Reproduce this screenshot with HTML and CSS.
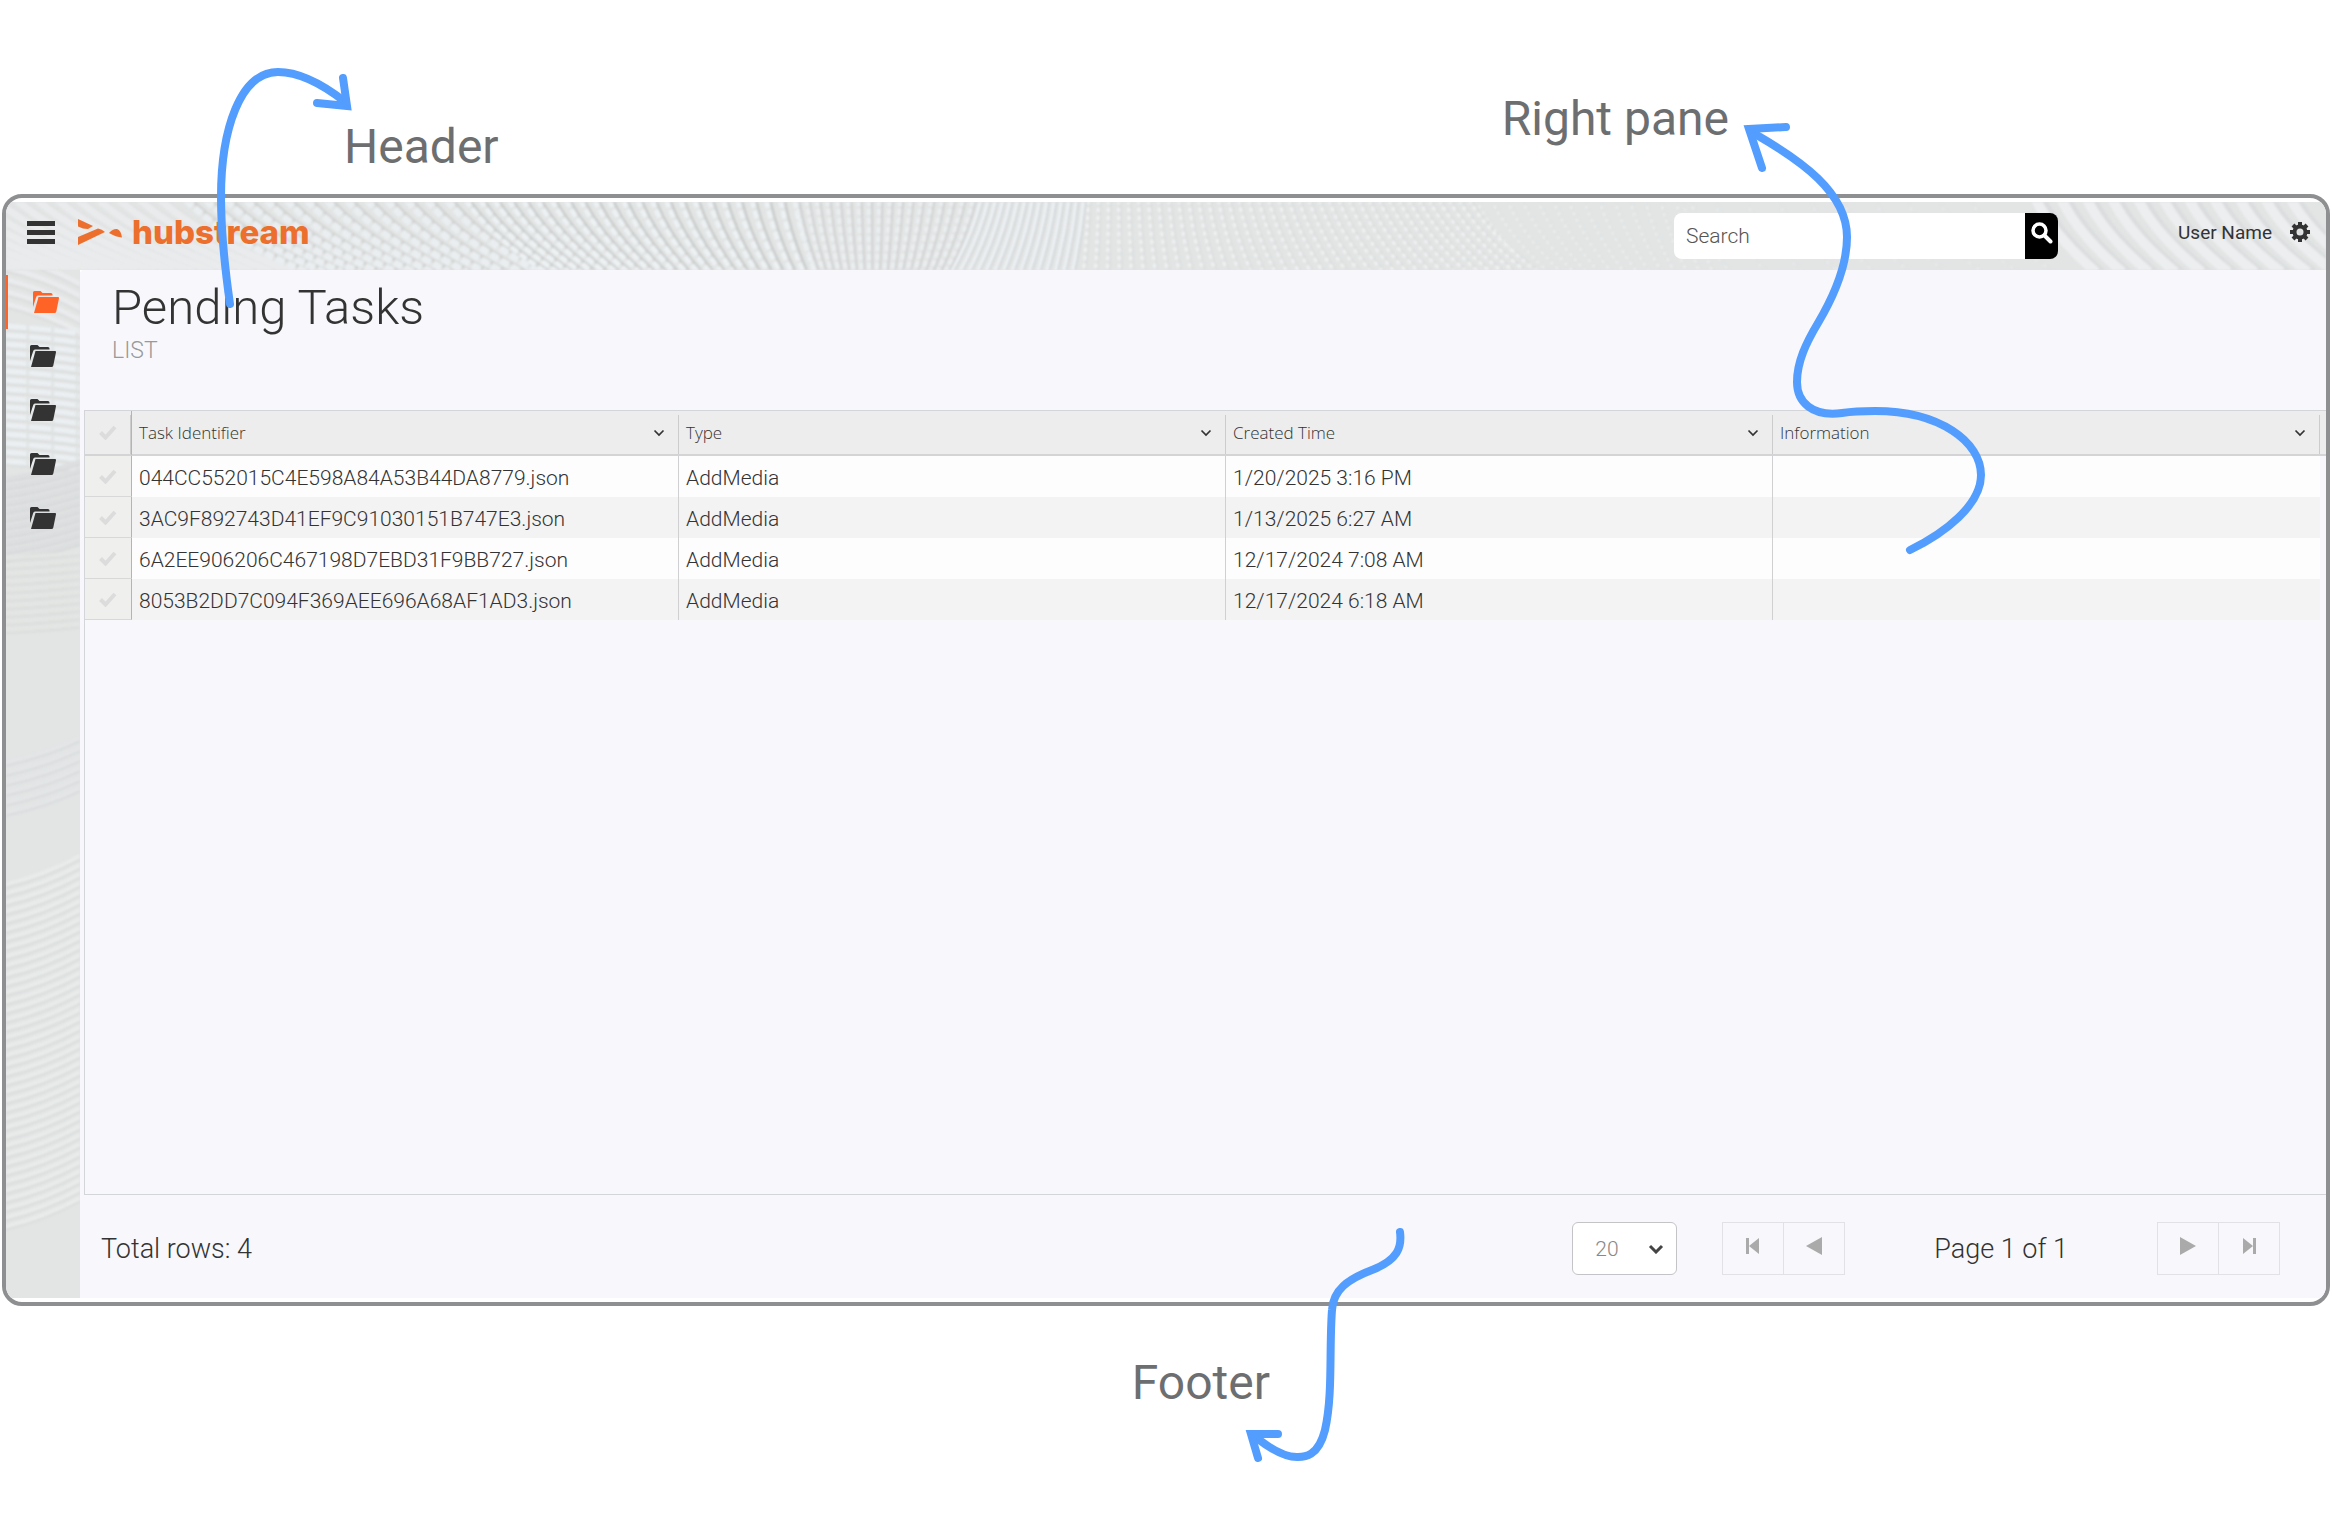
FILE: index.html
```
<!DOCTYPE html>
<html lang="en">
<head>
    <meta charset="UTF-8">
    <meta name="viewport" content="width=device-width, initial-scale=1.0">
    <title>Pending Tasks</title>
    <link rel="stylesheet" href="styles.css">
</head>
<body>
    <!-- shared icons -->
    <svg width="0" height="0" class="sprite" aria-hidden="true">
        <symbol id="folder" viewBox="0 0 26 22">
            <path d="M0 1.500Q0 0 1.500 0H7.500L9.500 2H18Q19.500 2 19.500 3.500V4.500H5Q3.600 4.500 3.200 6L0 16Z"/>
            <path d="M5.500 6H25Q26.300 6 26 7.300L23.300 20.500Q23 22 21.500 22H1Z"/>
        </symbol>
        <symbol id="check" viewBox="0 0 18 15">
            <path d="M1.500 7.500L6.500 12.500L16 2" fill="none" stroke="currentColor" stroke-width="4"/>
        </symbol>
        <symbol id="chevron" viewBox="0 0 12 8">
            <path d="M1.500 1.500L6 6L10.500 1.500" fill="none" stroke="currentColor" stroke-width="1.700"/>
        </symbol>
    </svg>

    <div class="app">
        <header class="topbar">
            <svg class="texture" id="topTexture" viewBox="0 0 2320 68" preserveAspectRatio="xMinYMin slice" aria-hidden="true"></svg>
            <button class="menu-btn" aria-label="Menu"><span></span><span></span><span></span></button>
            <a class="logo" href="#">
                <svg width="44" height="26" viewBox="0 0 44 26" aria-hidden="true">
                    <path d="M0 0L15 7L10 10Q5 10 0 7.500Z"/>
                    <path d="M0 18L20 9.500Q24 10 27 13L0 26Z"/>
                    <path d="M31 14Q35 9.500 39 10Q43 11 44 18.500Q38 18 31 14Z"/>
                </svg>
                <span>hubstream</span>
            </a>
            <form class="search">
                <input type="text" placeholder="Search" aria-label="Search">
                <button type="button" aria-label="Run search">
                    <svg width="22" height="22" viewBox="0 0 22 22"><circle cx="8.500" cy="8.500" r="6.500" fill="none" stroke="#fff" stroke-width="3.500"/><path d="M13.500 13.500L19.500 19.500" stroke="#fff" stroke-width="4" stroke-linecap="round"/></svg>
                </button>
            </form>
            <div class="user">
                <span>User Name</span>
                <button aria-label="Settings">
                    <svg width="20" height="20" viewBox="0 0 20 20"><circle cx="10" cy="10" r="5.500" fill="none" stroke="#333" stroke-width="4"/><path d="M10 0V4M10 16V20M0 10H4M16 10H20M3 3L5.500 5.500M14.500 14.500L17 17M17 3L14.500 5.500M5.500 14.500L3 17" stroke="#333" stroke-width="4"/></svg>
                </button>
            </div>
        </header>

        <nav class="sidebar" aria-label="Lists">
            <svg class="texture" id="sideTexture" viewBox="0 0 74 1028" preserveAspectRatio="xMinYMin slice" aria-hidden="true"></svg>
            <a class="active" href="#" aria-label="Folder 1"><svg width="26" height="22"><use href="#folder"/></svg></a>
            <a href="#" aria-label="Folder 2"><svg width="26" height="22"><use href="#folder"/></svg></a>
            <a href="#" aria-label="Folder 3"><svg width="26" height="22"><use href="#folder"/></svg></a>
            <a href="#" aria-label="Folder 4"><svg width="26" height="22"><use href="#folder"/></svg></a>
            <a href="#" aria-label="Folder 5"><svg width="26" height="22"><use href="#folder"/></svg></a>
        </nav>

        <main class="panel">
            <div class="title">
                <h1>Pending Tasks</h1>
                <p>LIST</p>
            </div>

            <div class="grid">
                <table>
                    <colgroup><col class="col-check"><col><col><col><col><col class="col-end"></colgroup>
                    <thead>
                        <tr>
                            <th class="pick"><label><input type="checkbox" aria-label="Select all"><svg width="18" height="15"><use href="#check"/></svg></label></th>
                            <th><div class="head">Task Identifier<button aria-label="Task Identifier menu"><svg width="12" height="8"><use href="#chevron"/></svg></button></div></th>
                            <th><div class="head">Type<button aria-label="Type menu"><svg width="12" height="8"><use href="#chevron"/></svg></button></div></th>
                            <th><div class="head">Created Time<button aria-label="Created Time menu"><svg width="12" height="8"><use href="#chevron"/></svg></button></div></th>
                            <th><div class="head">Information<button aria-label="Information menu"><svg width="12" height="8"><use href="#chevron"/></svg></button></div></th>
                            <th class="end"></th>
                        </tr>
                    </thead>
                    <tbody>
                        <tr>
                            <td class="pick"><label><input type="checkbox" aria-label="Select row 1"><svg width="18" height="15"><use href="#check"/></svg></label></td>
                            <td>044CC552015C4E598A84A53B44DA8779.json</td><td>AddMedia</td><td>1/20/2025 3:16 PM</td><td></td><td class="end"></td>
                        </tr>
                        <tr>
                            <td class="pick"><label><input type="checkbox" aria-label="Select row 2"><svg width="18" height="15"><use href="#check"/></svg></label></td>
                            <td>3AC9F892743D41EF9C91030151B747E3.json</td><td>AddMedia</td><td>1/13/2025 6:27 AM</td><td></td><td class="end"></td>
                        </tr>
                        <tr>
                            <td class="pick"><label><input type="checkbox" aria-label="Select row 3"><svg width="18" height="15"><use href="#check"/></svg></label></td>
                            <td>6A2EE906206C467198D7EBD31F9BB727.json</td><td>AddMedia</td><td>12/17/2024 7:08 AM</td><td></td><td class="end"></td>
                        </tr>
                        <tr>
                            <td class="pick"><label><input type="checkbox" aria-label="Select row 4"><svg width="18" height="15"><use href="#check"/></svg></label></td>
                            <td>8053B2DD7C094F369AEE696A68AF1AD3.json</td><td>AddMedia</td><td>12/17/2024 6:18 AM</td><td></td><td class="end"></td>
                        </tr>
                    </tbody>
                </table>
            </div>

            <footer class="pager">
                <span class="total">Total rows: 4</span>
                <div class="page-size">
                    <select aria-label="Rows per page"><option>20</option><option>50</option></select>
                    <svg width="16" height="10" viewBox="0 0 16 10"><path d="M2 2L8 8L14 2" fill="none" stroke="#444" stroke-width="3"/></svg>
                </div>
                <div class="btn-group">
                    <button aria-label="First page"><svg width="14" height="18" viewBox="0 0 14 18"><path d="M0 1H3V17H0ZM13 1V17L3 9Z"/></svg></button>
                    <button aria-label="Previous page"><svg width="16" height="18" viewBox="0 0 16 18"><path d="M16 0V18L0 9Z"/></svg></button>
                </div>
                <span class="page-label">Page 1 of 1</span>
                <div class="btn-group">
                    <button aria-label="Next page"><svg width="16" height="18" viewBox="0 0 16 18"><path d="M0 0V18L16 9Z"/></svg></button>
                    <button aria-label="Last page"><svg width="14" height="18" viewBox="0 0 14 18"><path d="M14 1H11V17H14ZM1 1V17L11 9Z"/></svg></button>
                </div>
            </footer>
        </main>
    </div>

    <!-- callouts drawn over the app -->
    <div class="callout callout-header">
        <span>Header</span>
        <svg width="150" height="260" viewBox="210 60 150 260"><path d="M230 304C223 255 221 220 221 197C221 130 240 72 278 72C298 72 322 84 344 101"/><path d="M343 78L347 106L317 103"/></svg>
    </div>
    <div class="callout callout-right">
        <span>Right pane</span>
        <svg width="260" height="450" viewBox="1735 115 260 450"><path d="M1755 134C1800 160 1847 192 1847 237C1847 266 1834 296 1818 323C1806 343 1797 362 1797 382C1797 402 1812 417 1842 413C1855 411 1865 411 1875 411C1940 411 1981 442 1981 475C1981 505 1945 533 1910 550"/><path d="M1786 127L1749 129L1762 168"/></svg>
    </div>
    <div class="callout callout-footer">
        <span>Footer</span>
        <svg width="170" height="250" viewBox="1240 1220 170 250"><path d="M1400 1232C1402 1247 1398 1260 1372 1270C1348 1279 1333 1290 1332 1310C1329 1350 1333 1395 1325 1430C1318 1458 1303 1457 1297 1457C1284 1457 1271 1449 1258 1439"/><path d="M1278 1434H1251L1258 1458"/></svg>
    </div>

    <script src="texture.js"></script>
</body>
</html>
```

FILE: styles.css
```
* {
    box-sizing: border-box;
}

body {
    margin: 0;
    min-height: 100vh;
    padding: 194px 2px 214px;
    background: #fff;
    color: #333;
    font-family: Roboto, "Liberation Sans", sans-serif;
    font-weight: 300;
    font-size: 21px;
    position: relative;
    display: flex;
}

button {
    border: 0;
    padding: 0;
    background: none;
    color: inherit;
    cursor: pointer;
    display: flex;
    align-items: center;
    justify-content: center;
}

a {
    text-decoration: none;
}

.sprite {
    position: absolute;
}

.app {
    flex: 1;
    border: 4px solid #8e8f91;
    border-radius: 20px;
    padding: 4px 0;
    overflow: hidden;
    display: grid;
    grid-template-columns: 74px 1fr;
    grid-template-rows: 68px 1fr;
}

/* Top bar */
.topbar {
    grid-column: 1 / 3;
    position: relative;
    display: flex;
    align-items: center;
    padding: 0 16px 8px 21px;
    background: #e3e5e5;
    overflow: hidden;
}

.texture {
    position: absolute;
    left: 0;
    top: 0;
    width: 100%;
    height: 100%;
    filter: blur(1px);
}

.topbar > *:not(.texture) {
    position: relative;
}

.menu-btn {
    width: 28px;
    flex-direction: column;
    gap: 4px;
    margin-right: 23px;
}

.menu-btn span {
    width: 28px;
    height: 5px;
    background: #333;
}

.logo {
    display: flex;
    align-items: center;
    gap: 10px;
    color: #ec6f2d;
    font-family: Inter, sans-serif;
    font-weight: 800;
    font-size: 33px;
    line-height: 40px;
}

.logo svg {
    fill: #ec6f2d;
}

.search {
    display: flex;
    width: 384px;
    height: 46px;
    margin: 8px 120px 0 auto;
    border-radius: 8px;
    overflow: hidden;
}

.search input {
    flex: 1;
    min-width: 0;
    border: 0;
    padding: 0 12px;
    background: #fff;
    font-family: inherit;
    font-weight: 300;
    font-size: 21px;
}

.search input::placeholder {
    color: #555;
}

.search button {
    width: 33px;
    background: #000;
    padding-bottom: 6px;
}

.user {
    display: flex;
    align-items: center;
    gap: 18px;
    font-weight: 400;
    font-size: 19px;
}

/* Sidebar */
.sidebar {
    position: relative;
    background: #e3e5e5;
    padding-top: 5px;
    overflow: hidden;
}

.sidebar a {
    position: relative;
    display: flex;
    align-items: center;
    height: 54px;
    padding-left: 24px;
}

.sidebar a svg {
    fill: #333;
}

.sidebar .active {
    padding-left: 25px;
    border-left: 2px solid #ff6426;
}

.sidebar .active svg {
    fill: #ff6426;
}

/* Main panel */
.panel {
    background: #f8f8fc;
    border-top-left-radius: 4px;
    display: flex;
    flex-direction: column;
    padding-left: 4px;
}

.title {
    height: 140px;
    padding: 8px 28px 0;
}

.title h1 {
    margin: 0;
    font-weight: 300;
    font-size: 49px;
    line-height: 60px;
}

.title p {
    margin: 0;
    font-size: 23px;
    line-height: 26px;
    color: #999;
}

.grid {
    flex: 1;
    border: 1px solid #d4d5d8;
    border-right: 0;
}

table {
    width: 100%;
    table-layout: fixed;
    border-collapse: separate;
    border-spacing: 0;
}

.col-check {
    width: 47px;
}

.col-end {
    width: 6px;
}

th {
    height: 45px;
    padding: 0 14px 0 7px;
    border-bottom: 2px solid #d4d4d6;
    background: linear-gradient(#ccc, #ccc) right bottom / 1px 39px no-repeat #ededed;
    font-family: "Open Sans", "Noto Sans", sans-serif;
    font-weight: 300;
    font-size: 17px;
    text-align: left;
}

.head {
    display: flex;
    align-items: center;
    justify-content: space-between;
}

td {
    height: 41px;
    padding: 2px 7px 0;
    border-right: 1px solid #d0d0d2;
    background: #fdfdfd;
}

td:nth-child(5) {
    border-right: 0;
}

tbody tr:nth-child(even) td {
    background: #f3f3f3;
}

th.pick,
td.pick {
    padding: 0;
    border-right: 1px solid #b4b4b8;
    color: #dcdcdc;
}

tbody tr td.pick {
    background: #efefed;
    border-bottom: 1px solid #d8d8d8;
}

.pick label {
    display: flex;
    justify-content: center;
    position: relative;
}

.pick input {
    position: absolute;
    opacity: 0;
    margin: 0;
}

th.end {
    padding: 0;
    background: #ededed;
}

tbody tr td.end {
    padding: 0;
    border: 0;
    background: none;
}

/* Footer */
.pager {
    height: 103px;
    display: flex;
    align-items: center;
    padding: 4px 46px 0 17px;
    font-size: 27px;
}

.page-size {
    position: relative;
    margin-left: auto;
    margin-right: 45px;
}

.page-size select {
    display: block;
    appearance: none;
    width: 105px;
    height: 53px;
    padding: 0 22px;
    border: 1px solid #c4c4c8;
    border-radius: 6px;
    background: #fff;
    color: #888;
    font-family: inherit;
    font-weight: 300;
    font-size: 21px;
}

.page-size svg {
    position: absolute;
    right: 13px;
    top: 22px;
    pointer-events: none;
}

.btn-group {
    display: flex;
}

.btn-group button {
    width: 62px;
    height: 53px;
    padding-bottom: 6px;
    border: 1px solid #e2e2e6;
}

.btn-group button + button {
    margin-left: -1px;
}

.btn-group svg {
    fill: #aaa;
}

.page-label {
    margin: 0 89px;
}

/* Callouts */
.callout {
    position: absolute;
    color: #6d6e70;
    font-weight: 400;
    font-size: 48px;
    line-height: 60px;
    white-space: nowrap;
    pointer-events: none;
}

.callout span,
.callout svg {
    position: absolute;
    left: 0;
    top: 0;
}

.callout path {
    fill: none;
    stroke: #539dff;
    stroke-width: 8;
    stroke-linecap: round;
}

.callout-header {
    left: 210px;
    top: 60px;
}

.callout-header span {
    left: 134px;
    top: 57px;
}

.callout-right {
    right: 597px;
    top: 115px;
}

.callout-right span {
    left: auto;
    right: 6px;
    top: -26px;
}

.callout-footer {
    left: 1240px;
    bottom: 300px;
}

.callout-footer span {
    left: auto;
    right: -30px;
    top: 133px;
}
```

FILE: texture.js
```
// Light wave texture behind the top bar and the sidebar
function addLine(svg, d, color, width, dash) {
    const path = document.createElementNS("http://www.w3.org/2000/svg", "path");
    path.setAttribute("d", d);
    path.setAttribute("fill", "none");
    path.setAttribute("stroke", color);
    path.setAttribute("stroke-width", width);
    if (dash) path.setAttribute("stroke-dasharray", dash);
    svg.appendChild(path);
}

// [from, to, slant at from, slant at to, step, width, light, dark, dash]
const topBands = [
    [-120, 240, 150, 130, 20, 7, "#e9ebec", "#dfe0e1", ""],
    [240, 500, 120, 90, 19, 7, "#eaeef0", "#d0d1d1", "9 3"],
    [500, 800, 80, 20, 13, 5, "#edf1f3", "#c8caca", "8 3"],
    [800, 960, 20, -30, 9, 4, "#ebeef0", "#cfd0d1", "6 3"],
    [960, 1080, -30, -10, 8, 3, "#edf1f4", "#cfd2d4", ""],
    [1080, 1500, -5, 70, 11, 3, "#f1f2f3", "#dadcdc", "4 4"],
    [1500, 1700, 60, 20, 14, 2, "#f2f4f4", "#e0e2e2", "2 5"],
    [1700, 2040, 50, 90, 34, 2, "#ebedee", "#e0e2e2", "2 8"],
    [2060, 2330, 60, 70, 26, 10, "#eceeef", "#dadcdd", ""]
];

const topSvg = document.getElementById("topTexture");
topBands.forEach(([from, to, s1, s2, step, width, light, dark, dash]) => {
    for (let x = from; x < to; x += step) {
        const slant = s1 + (s2 - s1) * (x - from) / (to - from);
        const line = (dx) => `M${x + dx - slant / 2} -2Q${x + dx - slant / 5} 34 ${x + dx + slant / 2} 70`;
        addLine(topSvg, line(width * 0.8), dark, width / 2, "");
        addLine(topSvg, line(0), light, width, dash);
    }
});

// [from, to, rise, step, width, light, dark, dash]
const sideBands = [
    [0, 60, -30, 12, 5, "#e9ebec", "#dcdede", ""],
    [60, 200, -8, 9, 5, "#ebeff2", "#dddfdf", "22 3"],
    [200, 285, 18, 8, 4, "#dcdedf", "#d6d8d9", ""],
    [285, 362, 6, 8, 4, "#e3e5e3", "#dadcdb", ""],
    [480, 540, 26, 10, 4, "#e3e5e6", "#d8dadd", ""],
    [600, 950, 30, 9, 4, "#e8ebea", "#dadcdb", ""]
];

const sideSvg = document.getElementById("sideTexture");
sideBands.forEach(([from, to, rise, step, width, light, dark, dash]) => {
    for (let y = from; y < to; y += step) {
        const line = (dy) => `M-2 ${y + dy + rise / 2}Q40 ${y + dy + rise / 6} 76 ${y + dy - rise / 2}`;
        addLine(sideSvg, line(width * 0.8), dark, width / 2, "");
        addLine(sideSvg, line(0), light, width, dash);
    }
});
```
